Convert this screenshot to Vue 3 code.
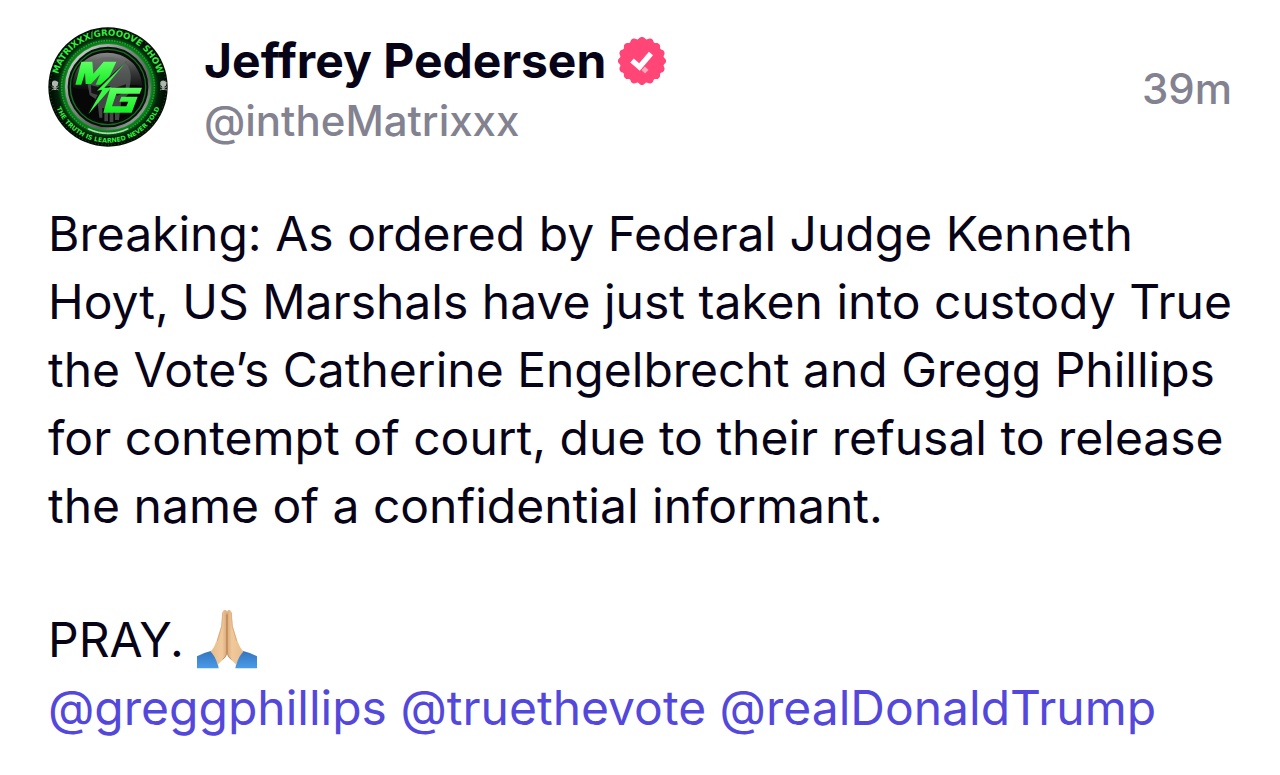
<script setup>
const author = { name: 'Jeffrey Pedersen', handle: '@intheMatrixxx', age: '39m' }
const mentions = ['@greggphillips', '@truethevote', '@realDonaldTrump']

const bumps = 16
const sealPoint = (r, a) => `${(24 + r * Math.sin(a)).toFixed(2)} ${(24 - r * Math.cos(a)).toFixed(2)}`
let seal = `M${sealPoint(22, -Math.PI / bumps)}`
for (let i = 0; i < bumps; i++) {
  const a = (i * 2 * Math.PI) / bumps
  const half = Math.PI / bumps
  seal += `C${sealPoint(22.4, a - half * 0.6)} ${sealPoint(24.4, a - half * 0.5)} ${sealPoint(24, a)}`
  seal += `C${sealPoint(24.4, a + half * 0.5)} ${sealPoint(22.4, a + half * 0.6)} ${sealPoint(22, a + half)}`
}
seal += 'Z'
</script>

<template>
  <article class="post">
    <header class="head">
      <svg class="avatar" viewBox="24 20 360 360" role="img" aria-label="Matrixxx Grooove Show logo">
        <defs>
          <radialGradient id="ring" gradientUnits="userSpaceOnUse" cx="204" cy="200" r="180">
            <stop offset=".7" stop-color="#12a026" />
            <stop offset=".76" stop-color="#0a6c17" />
            <stop offset=".84" stop-color="#04220a" />
            <stop offset="1" stop-color="#020502" />
          </radialGradient>
          <linearGradient id="metal" x1="0" y1="0" x2="1" y2="1">
            <stop offset="0" stop-color="#e3e6e4" />
            <stop offset=".35" stop-color="#8b928d" />
            <stop offset=".7" stop-color="#59625c" />
            <stop offset="1" stop-color="#c4cbc6" />
          </linearGradient>
          <linearGradient id="glass" x1="0" y1="0" x2="0" y2="1">
            <stop offset="0" stop-color="#858886" />
            <stop offset=".5" stop-color="#3a3c3b" />
            <stop offset="1" stop-color="#0b0b0b" />
          </linearGradient>
          <linearGradient id="neon" x1="0" y1="0" x2="0" y2="1">
            <stop offset="0" stop-color="#5cff62" />
            <stop offset="1" stop-color="#14ee22" />
          </linearGradient>
          <path id="arc-top" d="M50 200A154 154 0 0 1 358 200" />
          <path id="arc-bottom" d="M37 200A167 167 0 0 0 371 200" />
        </defs>
        <circle cx="204" cy="200" r="179" fill="url(#ring)" />
        <circle cx="204" cy="200" r="174" fill="none" stroke="#0c4d16" stroke-width="4" stroke-dasharray="3 7" />
        <circle cx="204" cy="200" r="139" fill="none" stroke="#18a52a" stroke-width="5" stroke-dasharray="5 3" />
        <circle cx="204" cy="200" r="125" fill="#08110a" stroke="url(#metal)" stroke-width="8" />
        <circle cx="204" cy="200" r="113" fill="#0a0c0a" stroke="#176d22" stroke-width="4" />
        <circle cx="202" cy="200" r="105" fill="#070707" />
        <path d="M98 201C99 64 300 62 307 198C263 180 174 226 98 201Z" fill="url(#glass)" />
        <path d="M142 188C137 130 169 108 210 110C254 112 279 142 271 187L265 222L244 242L237 299H225V263H220V305H209V263H204V303H193V263H187V292H178L172 240L149 224Z" fill="#646967" opacity=".65" />
        <path d="M153 195L190 204L176 225L154 218ZM218 205L258 192L256 215L231 226Z" fill="#121513" />
        <path d="M124 124H157L160 160L191 124H229L197 193H167L181 161L153 191H137L135 157L124 193H106Z" fill="url(#neon)" />
        <path d="M211 202H306L299 220H229L216 258H259L265 244H238L244 229H293L275 277H190Z" fill="url(#neon)" />
        <path d="M262 121L188 199L212 197L138 286L180 211L158 214Z" fill="#111" />
        <path d="M258 125L193 203L215 201L145 282L187 208L171 211Z" fill="#39f843" />
        <path d="M144 325A140 140 0 0 0 264 325" fill="none" stroke="#d7f5da" stroke-width="5" opacity=".75" />
        <g fill="#afb5b1">
          <path d="M36 185Q45 176 55 186L53 196L49 198V209H41V198L36 195Z" />
          <path d="M361 185Q370 176 380 186L378 196L374 198V209H366V198L361 195Z" />
          <path d="M35 199L56 209M56 199L35 209M360 199L381 209M381 199L360 209" stroke="#888f8a" stroke-width="3" />
        </g>
        <text class="logo-top"><textPath href="#arc-top" startOffset="50%">MATRIXXX/GROOOVE SHOW</textPath></text>
        <text class="logo-bottom"><textPath href="#arc-bottom" startOffset="50%">THE TRUTH IS LEARNED NEVER TOLD</textPath></text>
      </svg>
      <div class="who">
        <div class="name-row">
          <h1 class="name">{{ author.name }}</h1>
          <svg class="badge" viewBox="0 0 48 48" role="img" aria-label="Verified">
            <path :d="seal" fill="#ff4676" />
            <path d="M14 23.5L21.5 30L33 16.5" fill="none" stroke="#fff" stroke-width="5.4" />
            <path d="M27 29.5L30.5 33L27 36.5L23.5 33Z" fill="#ffa9c0" />
          </svg>
        </div>
        <a class="handle" href="#">{{ author.handle }}</a>
      </div>
      <time class="age">{{ author.age }}</time>
    </header>

    <div class="body">
      <p>
        Breaking: As ordered by Federal Judge Kenneth Hoyt, US Marshals have just taken into custody
        True the Vote’s Catherine Engelbrecht and Gregg Phillips for contempt of court, due to their
        refusal to release the name of a confidential informant.
      </p>
      <p>
        PRAY.
        <svg class="pray" viewBox="0 0 180 180" role="img" aria-label="Folded hands">
          <defs>
            <linearGradient id="sleeve" x1="0" y1="0" x2="0" y2="1">
              <stop offset="0" stop-color="#3474bd" />
              <stop offset="1" stop-color="#4a9be9" />
            </linearGradient>
            <linearGradient id="skin" x1="0" y1="0" x2="1" y2="0">
              <stop offset="0" stop-color="#e9bd8d" />
              <stop offset=".7" stop-color="#f0c99b" />
              <stop offset="1" stop-color="#d9a879" />
            </linearGradient>
            <g id="hand">
              <path d="M0 142Q22 130 44 125L60 150L65 178H0Z" fill="url(#sleeve)" />
              <path d="M77 9Q78 2 84 3Q90 3 90 12V134Q88 145 78 152Q68 160 62 168Q56 142 41 128Q53 113 59 95L73 51Z" fill="url(#skin)" />
              <path d="M89 16V134Q87 144 77 151" fill="none" stroke="#b47c4e" stroke-width="2" />
              <path d="M77 10L74 52L61 96" fill="none" stroke="#cf9c6c" stroke-width="2" />
            </g>
          </defs>
          <use href="#hand" />
          <use href="#hand" transform="translate(180 0) scale(-1 1)" />
        </svg>
        <br />
        <template v-for="m in mentions" :key="m"><a class="mention" href="#">{{ m }}</a>{{ ' ' }}</template>
      </p>
    </div>
  </article>
</template>

<style>
body {
  margin: 0;
  background: #fff;
}
</style>

<style scoped>
.post {
  box-sizing: border-box;
  padding: 27px 48px 32px;
  font-family: Inter, "Liberation Sans", sans-serif;
  color: #080418;
}
.head {
  display: flex;
  align-items: flex-start;
}
.avatar {
  flex: none;
  width: 120px;
  height: 120px;
}
.logo-top,
.logo-bottom {
  font-family: "DejaVu Sans", sans-serif;
  font-weight: 700;
  text-anchor: middle;
  fill: #31ee3c;
}
.logo-top {
  font-size: 26px;
}
.logo-bottom {
  font-size: 19px;
}
.who {
  flex: 1;
  margin-left: 36px;
  padding-top: 4px;
}
.name-row {
  display: flex;
  align-items: center;
  gap: 12px;
}
.name {
  margin: 0;
  font-size: 48px;
  line-height: 60px;
  font-weight: 700;
}
.badge {
  flex: none;
  width: 48px;
  height: 48px;
}
.handle {
  display: block;
  font-size: 42px;
  line-height: 60px;
  font-weight: 500;
  color: #838290;
  text-decoration: none;
}
.age {
  align-self: center;
  font-size: 42px;
  line-height: 60px;
  font-weight: 500;
  color: #838290;
}
.body {
  display: flex;
  flex-direction: column;
  gap: 66px;
  margin-top: 49px;
  font-size: 48px;
  line-height: 68px;
}
.body p {
  margin: 0;
}
.pray {
  width: 60px;
  height: 60px;
  vertical-align: -12px;
}
.mention {
  color: #5448dc;
  text-decoration: none;
}
</style>
